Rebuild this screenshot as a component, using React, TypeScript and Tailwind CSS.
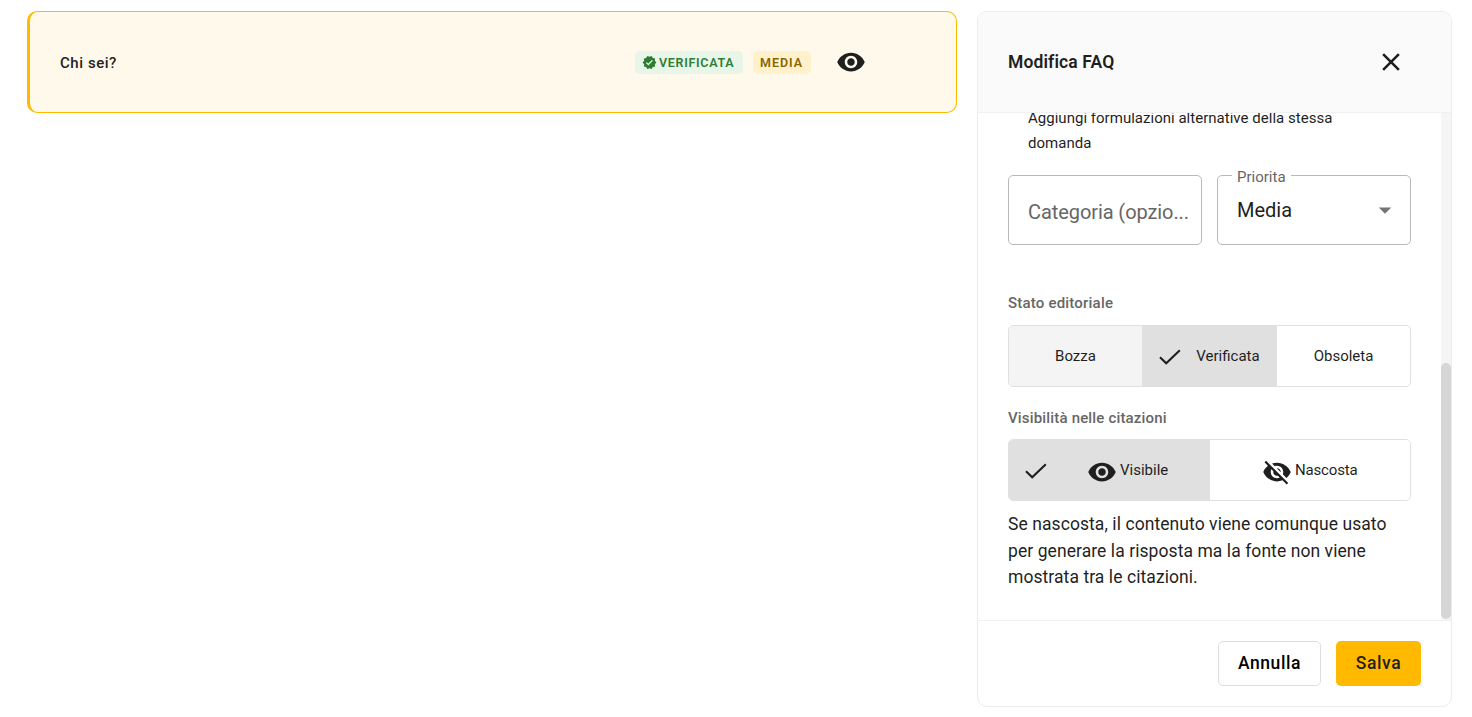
import { useState } from 'react'
import clsx from 'clsx'
import { MdArrowDropDown, MdClose, MdVerified, MdVisibility, MdVisibilityOff } from 'react-icons/md'

const STATES = ['Bozza', 'Verificata', 'Obsoleta']

function CheckMark({ className }: { className?: string }) {
  return (
    <svg viewBox="0 0 22 16" className={clsx('w-[22px] h-4 shrink-0 mt-0.5', className)} fill="none" stroke="currentColor" strokeWidth="2.1">
      <path d="M1 8.2 7.2 14.2 20.8 1.2" />
    </svg>
  )
}

function FaqCard() {
  return (
    <div className="flex-1 h-[102px] flex items-center rounded-[10px] border border-l-3 border-[#ffba00] bg-[#fff9eb] pl-[30px] pr-[90px]">
      <span className="flex-1 pt-0.5 text-[15px] font-medium tracking-[0.55px]">Chi sei?</span>
      <div className="flex items-center gap-2.5">
        <span className="flex items-center pl-[7px] gap-0.5 w-[108px] h-[23px] rounded-[5px] bg-[#e8f5e9] text-[#2e7d32] text-[12.5px] font-semibold tracking-[0.7px] pt-0.5">
          <MdVerified size={15} className="shrink-0 -mt-0.5" />
          VERIFICATA
        </span>
        <span className="flex items-center pl-[7px] w-[58px] h-[23px] rounded-[5px] bg-[#fff1cc] text-[#8a6500] text-[12.5px] font-semibold tracking-[0.95px] pt-0.5">
          MEDIA
        </span>
      </div>
      <button className="ml-[25px]">
        <MdVisibility size={30} />
      </button>
    </div>
  )
}

export default function App() {
  const [state, setState] = useState('Verificata')
  const [visible, setVisible] = useState(true)

  return (
    <div className="w-[1472px] h-[717px] flex items-start gap-5 pl-[27px] pr-5 pt-[11px] bg-white text-[#1f1f1f] font-[Roboto,sans-serif] overflow-hidden">
      <FaqCard />

      <div className="w-[475px] h-[696px] flex flex-col rounded-[10px] border border-[#ececec] bg-white overflow-hidden">
        {/* Header */}
        <div className="h-[101px] shrink-0 flex items-center justify-between bg-[#fafafa] border-b border-[#f0f0f0] pl-[30px] pr-[45px]">
          <h2 className="text-[17.5px] font-semibold tracking-[0.12px]">Modifica FAQ</h2>
          <button>
            <MdClose size={30} />
          </button>
        </div>

        {/* Scrolled form */}
        <div className="h-[507px] shrink-0 flex overflow-hidden">
          <div className="flex-1 px-[30px]">
            <p className="-mt-[7px] px-5 text-[15px] leading-[25px] tracking-[0.02px]">Aggiungi formulazioni alternative della stessa domanda</p>

            <div className="mt-[19px] flex gap-[15px]">
              <div className="w-[194px] h-[70px] flex items-center rounded-[5px] border border-[#b9b9b9] pl-[19px] pt-1 text-xl tracking-[-0.08px] text-[#666] whitespace-nowrap">
                Categoria (opzio...
              </div>
              <div className="relative w-[194px] h-[70px] flex items-center justify-between rounded-[5px] border border-[#b9b9b9] pl-[19px] pr-[10px] text-xl">
                <span className="absolute -top-[9px] left-[14px] w-[59px] bg-white pl-[5px] text-[15px] leading-5 text-[#666]">Priorita</span>
                Media
                <MdArrowDropDown size={30} className="text-[#757575]" />
              </div>
            </div>

            <div className="mt-[46px] text-[15px] leading-[25px] font-medium tracking-[0.2px] text-[#666]">Stato editoriale</div>
            <div className="mt-[9px] h-[62px] flex rounded-[5px] border border-[#e0e0e0] overflow-hidden text-[15px]">
              {STATES.map(s => (
                <button
                  key={s}
                  onClick={() => setState(s)}
                  className={clsx(
                    'flex items-center justify-center',
                    s === state ? 'w-[135px] bg-[#e0e0e0] gap-[15px]' : 'flex-1',
                    s === 'Bozza' && s !== state && 'bg-[#f4f4f4]',
                  )}
                >
                  {s === state && <CheckMark />}
                  {s}
                </button>
              ))}
            </div>

            <div className="mt-[19px] text-[15px] leading-[25px] font-medium tracking-[0.17px] text-[#666]">Visibilità nelle citazioni</div>
            <div className="mt-[8px] h-[62px] flex rounded-[5px] border border-[#e0e0e0] overflow-hidden text-[15px]">
              <button
                onClick={() => setVisible(true)}
                className={clsx('w-1/2 flex items-center', visible ? 'bg-[#e0e0e0] pl-4' : 'bg-white justify-center')}
              >
                {visible && <CheckMark className="mr-10" />}
                <MdVisibility size={30} className="shrink-0 mt-[3px] mr-[3px]" />
                Visibile
              </button>
              <button
                onClick={() => setVisible(false)}
                className={clsx('w-1/2 flex items-center justify-center', visible ? 'bg-white' : 'bg-[#e0e0e0]')}
              >
                <MdVisibilityOff size={30} className="shrink-0 mt-[3px] mr-[3px]" />
                <span className="tracking-[-0.15px]">Nascosta</span>
              </button>
            </div>

            <p className="mt-[10px] text-[17.5px] leading-[26.6px] tracking-[0.07px]">
              Se nascosta, il contenuto viene comunque usato per generare la risposta ma la fonte non viene mostrata tra le citazioni.
            </p>
          </div>

          {/* Scrollbar track and thumb */}
          <div className="w-2.5 bg-[#f5f5f5] pt-[250px]">
            <div className="h-[256px] rounded-full bg-[#d6d6d6]" />
          </div>
        </div>

        {/* Footer */}
        <div className="flex-1 flex items-start justify-end gap-[15px] border-t border-[#f0f0f0] pt-5 pr-[30px] text-[17.5px] font-medium tracking-[0.6px]">
          <button className="w-[103px] h-[45px] rounded-[5px] border border-[#dedede] text-black">Annulla</button>
          <button className="w-[85px] h-[45px] rounded-[5px] bg-[#ffba00]">Salva</button>
        </div>
      </div>
    </div>
  )
}
